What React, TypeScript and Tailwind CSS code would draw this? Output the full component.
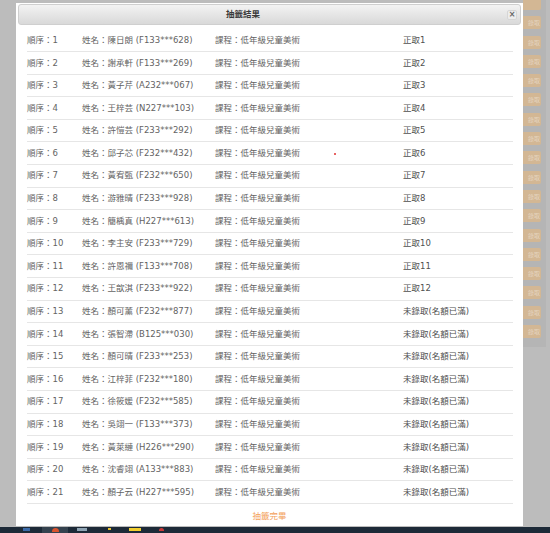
import React from "react";

interface Resultado {
  orden: number;
  nombre: string;
  id: string;
  estado: string;
}

const curso = "低年級兒童美術";

const resultados: Resultado[] = [
  { orden: 1, nombre: "陳日朗", id: "F133***628", estado: "正取1" },
  { orden: 2, nombre: "謝承軒", id: "F133***269", estado: "正取2" },
  { orden: 3, nombre: "黃子芹", id: "A232***067", estado: "正取3" },
  { orden: 4, nombre: "王梓芸", id: "N227***103", estado: "正取4" },
  { orden: 5, nombre: "許愷芸", id: "F233***292", estado: "正取5" },
  { orden: 6, nombre: "邱子芯", id: "F232***432", estado: "正取6" },
  { orden: 7, nombre: "黃宥甄", id: "F232***650", estado: "正取7" },
  { orden: 8, nombre: "游雅晴", id: "F233***928", estado: "正取8" },
  { orden: 9, nombre: "簡楀真", id: "H227***613", estado: "正取9" },
  { orden: 10, nombre: "李主安", id: "F233***729", estado: "正取10" },
  { orden: 11, nombre: "許恩禰", id: "F133***708", estado: "正取11" },
  { orden: 12, nombre: "王歆淇", id: "F233***922", estado: "正取12" },
  { orden: 13, nombre: "顏可薰", id: "F232***877", estado: "未錄取(名額已滿)" },
  { orden: 14, nombre: "張智滯", id: "B125***030", estado: "未錄取(名額已滿)" },
  { orden: 15, nombre: "顏可晴", id: "F233***253", estado: "未錄取(名額已滿)" },
  { orden: 16, nombre: "江梓菲", id: "F232***180", estado: "未錄取(名額已滿)" },
  { orden: 17, nombre: "徐筱媛", id: "F232***585", estado: "未錄取(名額已滿)" },
  { orden: 18, nombre: "吳翊一", id: "F133***373", estado: "未錄取(名額已滿)" },
  { orden: 19, nombre: "黃萊縺", id: "H226***290", estado: "未錄取(名額已滿)" },
  { orden: 20, nombre: "沈睿翊", id: "A133***883", estado: "未錄取(名額已滿)" },
  { orden: 21, nombre: "顏子云", id: "H227***595", estado: "未錄取(名額已滿)" },
];

// botones del fondo (tapados por el modal)
const botonesFondo = Array.from({ length: 18 }, (_, i) => i);

const App: React.FC = () => {
  return (
    <div
      className="relative w-[550px] h-[533px] overflow-hidden bg-[#bcbcbc] flex flex-col"
      style={{ fontFamily: '"DejaVu Sans", "Noto Sans CJK TC", sans-serif' }}
    >
      <div className="flex-1 flex">
        {/* Fondo izquierdo */}
        <div className="w-[16px] shrink-0" />

        {/* Modal */}
        <div className="w-[507px] shrink-0 mt-[3px] h-[523px] bg-white px-[2px] pt-[1px] flex flex-col">
          {/* Cabecera */}
          <div className="h-[21px] shrink-0 flex items-center border border-[#cfcfcf] rounded-[3px] bg-gradient-to-b from-[#f3f3f3] to-[#d9d9d9]">
            <div className="flex-1 text-center pl-[4px] pr-[44px] text-[8.5px] font-bold text-[#3a3a3a]">
              抽籤結果
            </div>
            <div className="w-[10px] h-[10px] mr-[3px] flex items-center justify-center rounded-[2px] bg-[#ececec] border border-[#d6d6d6] text-[8px] leading-none font-bold text-[#666]">
              ×
            </div>
          </div>

          {/* Lista */}
          <div className="pl-[9px] pr-[8px] pt-[4.5px] flex flex-col">
            {resultados.map((r) => (
              <div
                key={r.orden}
                className="h-[22.6px] flex items-center border-b border-[#e6e6e6] text-[8.5px] text-[#636363] whitespace-nowrap"
              >
                <div className="w-[55px] shrink-0">順序：{r.orden}</div>
                <div className="w-[133px] shrink-0">
                  姓名：{r.nombre} ({r.id})
                </div>
                <div className="w-[188px] shrink-0">課程：{curso}</div>
                <div className="flex-1 text-[#505050]">{r.estado}</div>
              </div>
            ))}
          </div>

          {/* Pie */}
          <div className="flex-1 flex items-center justify-center pt-[2px] text-[8.5px] text-[#f3a15b]">
            抽籤完畢
          </div>
        </div>

        {/* Panel derecho con botones */}
        <div className="w-[23px] shrink-0 self-start h-[347px] bg-[#b5b5b5] flex flex-col gap-[6.3px] pr-[5px]">
          <div className="h-[10px] shrink-0 rounded-br-[2px] bg-[#d3b794]" />
          {botonesFondo.slice(1).map((i) => (
            <div
              key={i}
              className="h-[13px] shrink-0 rounded-r-[2px] bg-[#d3b794] flex items-center justify-end pr-[1px] text-[6px] text-white/40"
            >
              錄取
            </div>
          ))}
        </div>
      </div>

      {/* Barra de tareas */}
      <div className="h-[6px] shrink-0 bg-[#1d2a38] flex items-start">
        <div className="w-[7px] h-[3px] ml-[23px] mt-[1px] bg-[#3b6aa8]" />
        <div className="w-[26px] h-[6px] ml-[12px] bg-[#35424f] flex justify-center">
          <div className="w-[7px] h-[4px] mt-[1px] rounded-t-full bg-[#d9532e]" />
        </div>
        <div className="w-[10px] h-[3px] ml-[9px] mt-[1px] bg-[#8fa4b4]" />
        <div className="w-[3px] h-[2px] ml-[21px] mt-[1px] bg-[#e8c233]" />
        <div className="w-[12px] h-[3px] ml-[18px] mt-[1px] bg-[#f2cf2f]" />
        <div className="w-[5px] h-[3px] ml-[18px] mt-[1px] rounded-t-full bg-[#cc3a3a]" />
      </div>

      {/* punto rojo (cursor) */}
      <div className="absolute left-[334px] top-[153px] w-[2px] h-[2px] rounded-full bg-[#e03030]" />
    </div>
  );
};

export default App;
